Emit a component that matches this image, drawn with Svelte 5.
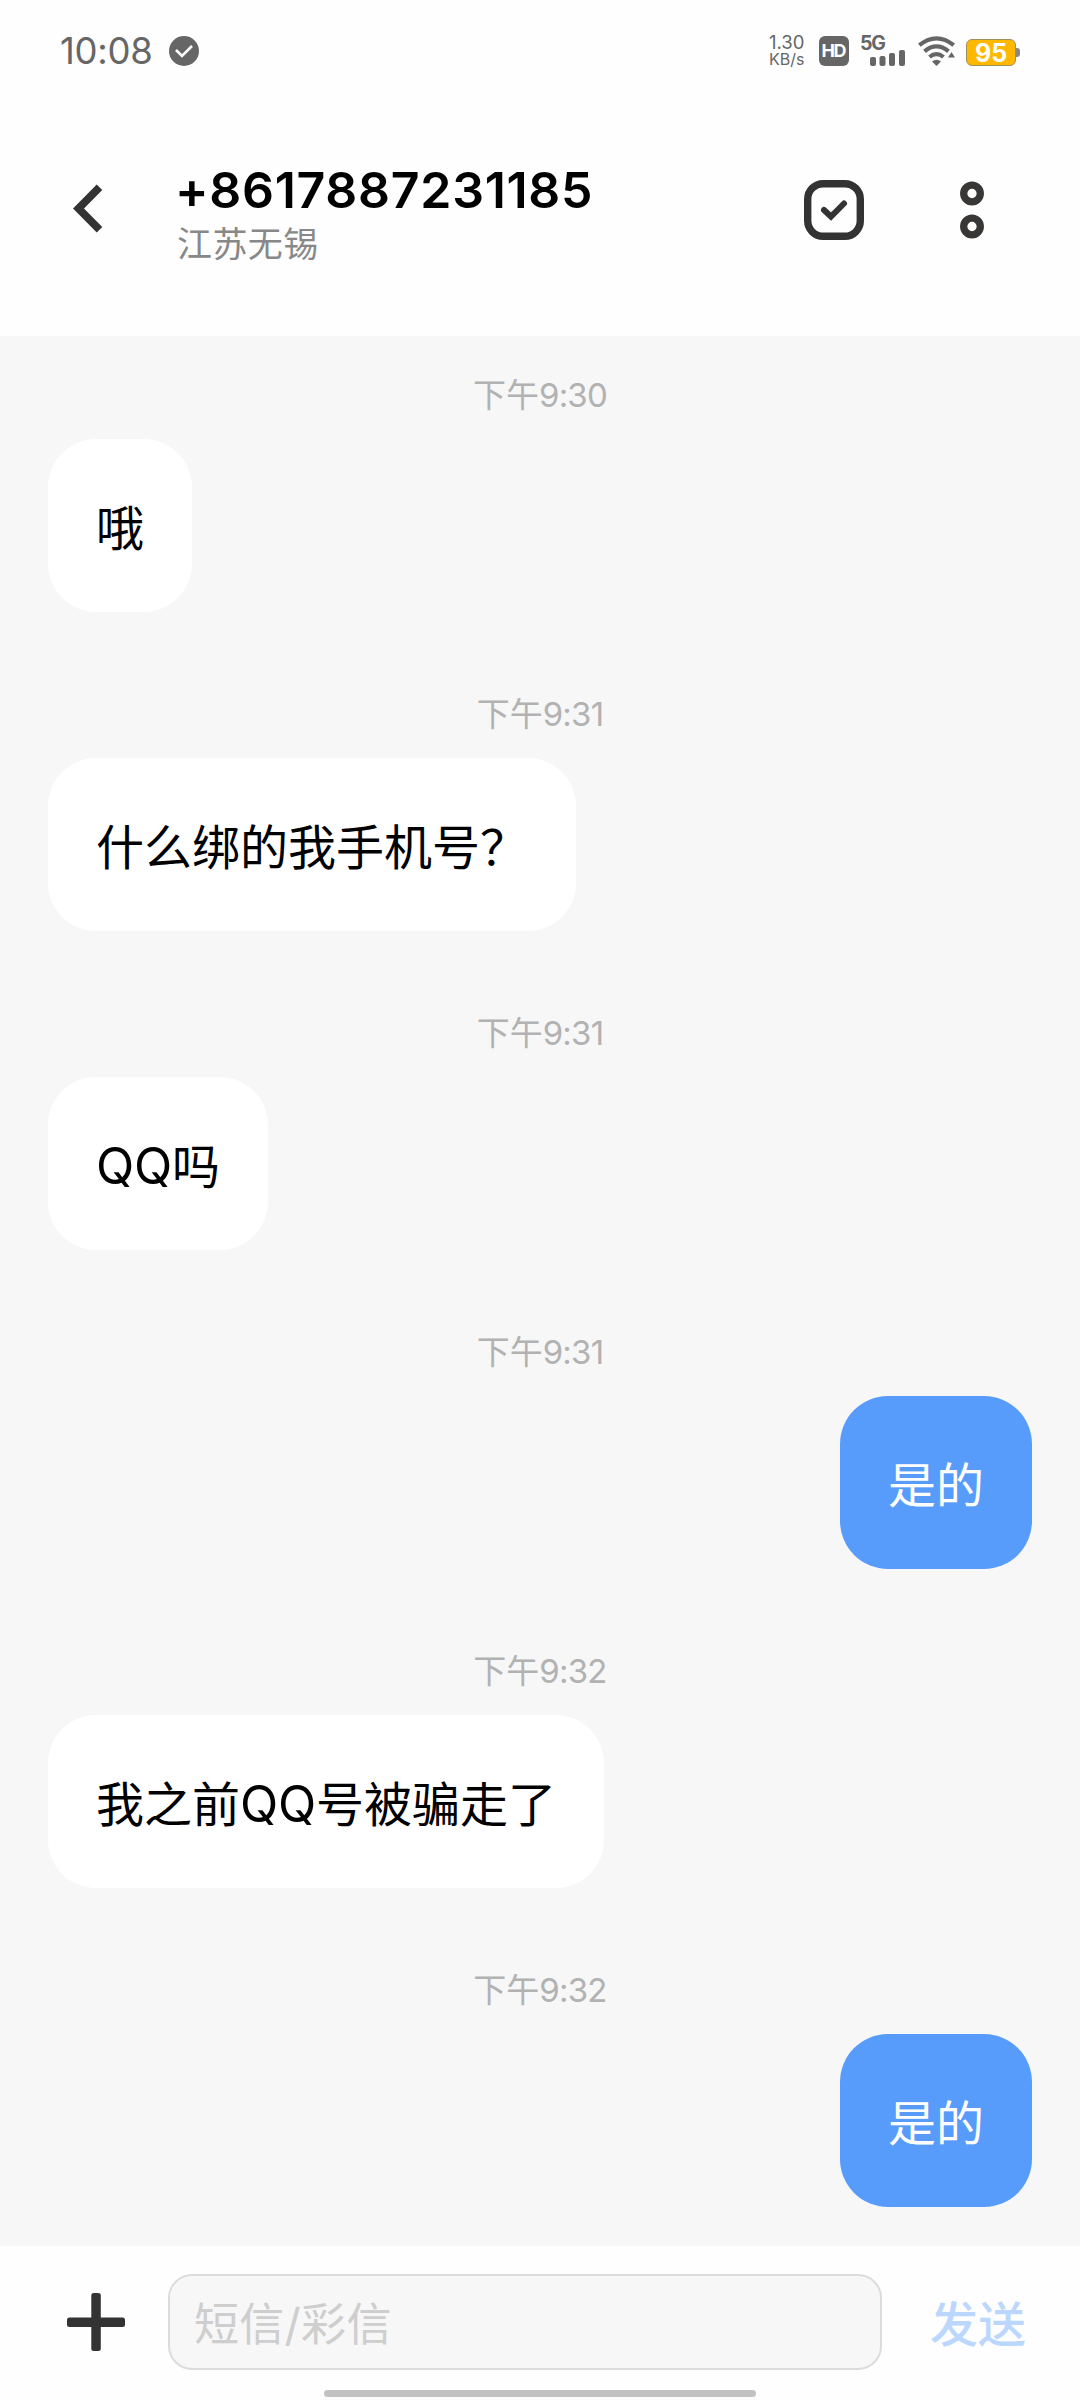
<script>
  const contact = { number: '+8617887231185', region: '江苏无锡' };

  let messages = $state([
    { id: 1, period: '下午', time: '9:30', text: '哦', mine: false },
    { id: 2, period: '下午', time: '9:31', text: '什么绑的我手机号？', mine: false },
    { id: 3, period: '下午', time: '9:31', text: 'QQ吗', mine: false },
    { id: 4, period: '下午', time: '9:31', text: '是的', mine: true },
    { id: 5, period: '下午', time: '9:32', text: '我之前QQ号被骗走了', mine: false },
    { id: 6, period: '下午', time: '9:32', text: '是的', mine: true }
  ]);

  let draft = $state('');

  // Latin runs are set slightly larger inside Chinese text
  function splitRuns(text) {
    return text.split(/([A-Za-z]+)/).filter(Boolean);
  }

  function handleSend() {
    if (!draft.trim()) return;
    messages.push({ id: messages.length + 1, period: '下午', time: '9:32', text: draft, mine: true });
    draft = '';
  }
</script>

<div class="screen">
  <div class="status-bar">
    <span class="clock">10:08</span>
    <svg class="status-check" width="30" height="30" viewBox="0 0 30 30">
      <circle cx="15" cy="15" r="15" fill="#666" />
      <path d="M7 14l6 6L23 10" fill="none" stroke="#fff" stroke-width="2.600" />
    </svg>

    <div class="net-speed">
      <span class="speed-value">1.30</span>
      <span class="speed-unit">KB/s</span>
    </div>
    <div class="hd">HD</div>
    <div class="signal">
      <span class="signal-type">5G</span>
      <svg width="35" height="16" viewBox="0 0 35 16" fill="#666">
        <rect x="0" y="7" width="6" height="9" rx="2" />
        <rect x="9.500" y="6" width="6" height="10" rx="2" />
        <rect x="19" y="3" width="6" height="13" rx="2" />
        <rect x="29" y="0" width="6" height="16" rx="2" />
      </svg>
    </div>
    <svg class="wifi" width="37" height="30" viewBox="0 0 37 30">
      <g fill="none" stroke="#666" stroke-width="4.200">
        <path d="M1.300 9.200Q18.500 -4.500 35.700 9.200" />
        <path d="M6.500 15.300Q18.500 5.500 30.500 15.300" />
        <path d="M11.500 21Q18.500 15.200 25.500 21" />
      </g>
      <path d="M14 25.500Q18.500 22 23 25.500L18.500 30z" fill="#666" />
      <path d="M30 21.500l3.500-5.500 3.500 5.500z" fill="#666" />
    </svg>
    <div class="battery">
      <span class="battery-level">95</span>
      <span class="battery-cap"></span>
    </div>
  </div>

  <header class="header">
    <button class="icon-button back" title="返回">
      <svg width="36" height="52" viewBox="0 0 36 52">
        <path d="M29.500 3.300L8.500 24.500l21 21.200" fill="none" stroke="#333" stroke-width="7.800" />
      </svg>
    </button>
    <div class="contact">
      <h1>{contact.number}</h1>
      <p>{contact.region}</p>
    </div>
    <button class="icon-button select" title="选择">
      <svg width="60" height="60" viewBox="0 0 60 60" fill="none" stroke="#333">
        <rect x="3.700" y="3.700" width="52.600" height="52.600" rx="15.500" stroke-width="7.400" />
        <path d="M20 30l7 6.500L40 23.500" stroke-width="6" stroke-linecap="round" />
      </svg>
    </button>
    <button class="icon-button more" title="更多">
      <svg width="24" height="58" viewBox="0 0 24 58" fill="none" stroke="#383736" stroke-width="7.300">
        <circle cx="12" cy="12.500" r="8.300" />
        <circle cx="12" cy="45.500" r="8.300" />
      </svg>
    </button>
  </header>

  <main class="chat">
    {#each messages as message (message.id)}
      <div class="message" class:mine={message.mine}>
        <time>{message.period}<span class="digits">{message.time}</span></time>
        <div class="bubble">
          {#each splitRuns(message.text) as run}<span class:latin={/[A-Za-z]/.test(run)}>{run}</span>{/each}
        </div>
      </div>
    {/each}
  </main>

  <footer class="footer">
    <div class="composer">
      <button class="icon-button add" title="添加">
        <svg width="58" height="58" viewBox="0 0 58 58" fill="#333">
          <rect x="0" y="24.500" width="58" height="9.500" rx="2.500" />
          <rect x="24.300" y="0" width="9.500" height="58" rx="2.500" />
        </svg>
      </button>
      <input class="draft" type="text" placeholder="短信/彩信" bind:value={draft} />
      <button class="send" onclick={handleSend}>发送</button>
    </div>
    <div class="home-bar"></div>
  </footer>
</div>

<style>
  :global(body) {
    margin: 0;
    background: #fff;
  }

  .screen {
    width: 1080px;
    height: 2400px;
    display: flex;
    flex-direction: column;
    overflow: hidden;
    background: #fefefe;
    font-family: Inter, 'Noto Sans CJK SC', sans-serif;
    color: #000;
  }

  button {
    padding: 0;
    border: none;
    background: none;
    font-family: inherit;
    cursor: pointer;
  }

  svg {
    display: block;
  }

  .status-bar {
    height: 102px;
    display: flex;
    align-items: center;
    padding: 0 60px;
    box-sizing: border-box;
    color: #666;
  }

  .clock {
    width: 109px;
    font-size: 36.5px;
    letter-spacing: -0.3px;
  }

  .net-speed {
    margin-left: auto;
    width: 50px;
    display: flex;
    flex-direction: column;
  }

  .speed-value {
    font-size: 18.5px;
    line-height: 17px;
  }

  .speed-unit {
    font-size: 16px;
    line-height: 17px;
  }

  .hd {
    width: 30px;
    height: 30px;
    border-radius: 6px;
    background: #666;
    color: #fff;
    font-size: 18px;
    font-weight: 700;
    line-height: 30px;
    text-align: center;
    letter-spacing: -1.5px;
    text-indent: -1.5px;
  }

  .signal {
    width: 44px;
    height: 30px;
    margin-left: 12px;
    display: flex;
    flex-direction: column;
  }

  .signal-type {
    height: 14px;
    margin-left: -1px;
    font-size: 19.5px;
    font-weight: 700;
    line-height: 15px;
    letter-spacing: -1.2px;
  }

  .signal svg {
    margin-left: 9px;
  }

  .wifi {
    margin-left: 13px;
  }

  .battery {
    margin: 3px 0 0 11px;
    display: flex;
    align-items: center;
  }

  .battery-level {
    width: 50px;
    height: 27px;
    box-sizing: border-box;
    border: 1px solid #a09060;
    border-radius: 6px;
    background: #ffb800;
    color: #fff;
    font-size: 25px;
    font-weight: 700;
    line-height: 27px;
    text-align: center;
  }

  .battery-cap {
    width: 4px;
    height: 9px;
    border-radius: 0 3px 3px 0;
    background: #888;
  }

  .header {
    height: 234px;
    display: flex;
    align-items: center;
    padding: 0 96px 18px 70px;
    box-sizing: border-box;
  }

  .contact {
    flex: 1;
    margin: 8px 0 0 69px;
  }

  .contact h1 {
    margin: 0;
    font-size: 50px;
    font-weight: 600;
    line-height: 60px;
    letter-spacing: 0.7px;
  }

  .contact p {
    margin: 0 0 0 2px;
    font-size: 35px;
    line-height: 48px;
    letter-spacing: 0.4px;
    color: #888;
  }

  .more {
    margin-left: 96px;
  }

  .chat {
    flex: 1;
    display: flex;
    flex-direction: column;
    gap: 43px;
    padding: 0 48px;
    background: #f7f7f7;
  }

  .message {
    display: flex;
    flex-direction: column;
    align-items: flex-start;
    padding-top: 36px;
  }

  time {
    align-self: center;
    margin-bottom: 21px;
    font-size: 33px;
    line-height: 46px;
    color: #b2b2b2;
  }

  .digits {
    letter-spacing: -0.8px;
  }

  .bubble {
    height: 173px;
    box-sizing: border-box;
    padding: 53px 48px 47px;
    border-radius: 48px;
    background: #fff;
    font-size: 48px;
    line-height: 73px;
    white-space: nowrap;
  }

  .latin {
    font-size: 50px;
    line-height: 1;
    letter-spacing: -0.3px;
  }

  .mine {
    align-items: flex-end;
  }

  .mine .bubble {
    background: #579bfb;
    color: #fff;
  }

  .footer {
    height: 154px;
    display: flex;
    flex-direction: column;
    align-items: center;
    background: #fefefe;
  }

  .composer {
    width: 100%;
    height: 144px;
    display: flex;
    align-items: center;
    padding: 8px 50px 0 67px;
    box-sizing: border-box;
  }

  .draft {
    width: 714px;
    height: 96px;
    margin: 0 48px 0 43px;
    padding: 4px 24px 0;
    box-sizing: border-box;
    border: 2px solid #dcdcdc;
    border-radius: 24px;
    outline: none;
    background: #f7f7f7;
    font-family: inherit;
    font-size: 45px;
    letter-spacing: 0.3px;
    color: #000;
  }

  .draft::placeholder {
    color: #cecece;
    opacity: 1;
  }

  .send {
    padding-bottom: 2px;
    font-size: 48px;
    font-weight: 500;
    white-space: nowrap;
    color: #bcd7fd;
  }

  .home-bar {
    width: 432px;
    height: 7px;
    border-radius: 4px;
    background: #c2c2c2;
  }
</style>
